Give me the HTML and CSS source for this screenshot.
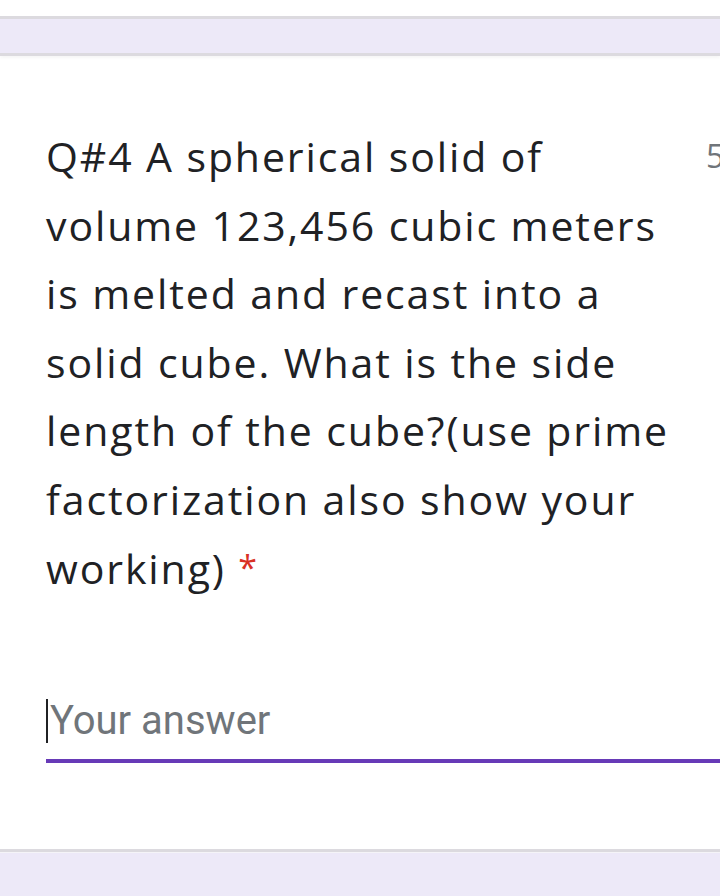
FILE: index.html
```html
<!DOCTYPE html>
<html>
<head>
<meta charset="utf-8">
<link rel="stylesheet" href="styles.css">
</head>
<body>
<div class="top-space"></div>
<div class="band band-top"></div>
<div class="card">
  <div class="header">
    <div class="question">Q#4 A spherical solid of volume 123,456 cubic meters is melted and recast into a solid cube. What is the side length of the cube?(use prime factorization also show your working) <span class="req">*</span></div>
    <div class="points">5 points</div>
  </div>
  <div class="answer">
    <div class="field"><span class="caret"></span><span class="placeholder">Your answer</span></div>
    <div class="line"></div>
  </div>
</div>
<div class="band band-bottom"></div>
</body>
</html>
```

FILE: styles.css
```css
html, body {
  margin: 0;
  padding: 0;
  background: #ffffff;
  width: 720px;
  height: 896px;
  overflow: hidden;
}
body {
  display: flex;
  flex-direction: column;
  font-family: "Open Sans", "Liberation Sans", sans-serif;
}
.top-space {
  height: 16px;
  flex: none;
}
.band {
  background: #ede9f8;
  flex: none;
}
.band-top {
  height: 34px;
  border-top: 3px solid #dcdadf;
  border-bottom: 3px solid #dcdadf;
  box-shadow: 0 2px 3px rgba(0,0,0,0.04);
}
.card {
  flex: 1;
  padding: 66px 0 0 46px;
  overflow: hidden;
}
.header {
  display: flex;
  align-items: flex-start;
  width: 720px;
}
.question {
  width: 640px;
  flex: none;
  font-size: 41px;
  line-height: 68.5px;
  color: #202124;
  letter-spacing: 1.9px;
}
.req {
  color: #d93025;
  letter-spacing: 0;
  font-size: 34px;
  vertical-align: 4px;
}
.points {
  flex: none;
  margin-left: 20px;
  font-size: 32px;
  line-height: 68.5px;
  color: #70757a;
  white-space: nowrap;
}
.answer {
  margin-top: 94px;
}
.field {
  display: flex;
  align-items: center;
  height: 48px;
}
.caret {
  width: 2px;
  height: 44px;
  background: #202124;
  flex: none;
}
.placeholder {
  font-family: Roboto, "Liberation Sans", sans-serif;
  font-size: 40px;
  color: #70757a;
  margin-left: 2px;
}
.line {
  margin-top: 14px;
  height: 4px;
  background: #673ab7;
}
.band-bottom {
  height: 44px;
  border-top: 3px solid #dcdadf;
  box-shadow: inset 0 1px 0 #f5f4f8;
}
```
